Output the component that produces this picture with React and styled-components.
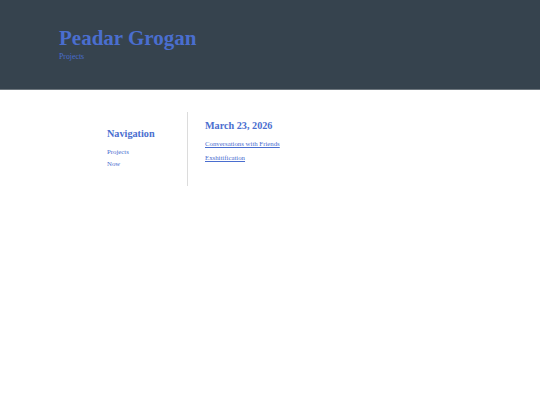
import React from "react";
import styled, { createGlobalStyle } from "styled-components";

const Global = createGlobalStyle`
  html, body { margin: 0; padding: 0; background: #ffffff; }
  body { font-family: "Liberation Serif", "Times New Roman", serif; }
`;

const BLUE = "#4a6ecf";

const Header = styled.header`
  background: #36434e;
  border-bottom: 1px solid #6d767d;
  padding: 26px 59px 27px;
`;

const Title = styled.h1`
  margin: 0;
  font-size: 21px;
  line-height: 24px;
  font-weight: bold;
  color: ${BLUE};
`;

const Sub = styled.a`
  display: block;
  margin-top: 2px;
  font-size: 7.8px;
  line-height: 10px;
  color: ${BLUE};
  text-decoration: none;
`;

const Main = styled.main`
  display: flex;
  align-items: flex-start;
  padding: 22px 0 0 107px;
`;

const NavCol = styled.nav`
  width: 80px;
  border-right: 1px solid #dcdcdc;
  padding: 16px 0 16px;
  display: flex;
  flex-direction: column;
`;

const Heading = styled.h3`
  margin: 0;
  font-size: 10.2px;
  line-height: 12px;
  font-weight: bold;
  color: ${BLUE};
`;

const NavList = styled.div`
  margin-top: 6px;
  display: flex;
  flex-direction: column;
`;

const NavLink = styled.a`
  font-size: 6.8px;
  line-height: 12px;
  color: ${BLUE};
  text-decoration: none;
`;

const Content = styled.section`
  padding: 7.5px 0 0 17px;
  display: flex;
  flex-direction: column;
`;

const PostList = styled.div`
  margin-top: 5px;
  display: flex;
  flex-direction: column;
`;

const PostLink = styled.a`
  font-size: 6.8px;
  line-height: 14px;
  color: ${BLUE};
  text-decoration: underline;
  align-self: flex-start;
`;

export default function App() {
  return (
    <>
      <Global />
      <Header>
        <Title>Peadar Grogan</Title>
        <Sub href="#">Projects</Sub>
      </Header>
      <Main>
        <NavCol>
          <Heading>Navigation</Heading>
          <NavList>
            <NavLink href="#">Projects</NavLink>
            <NavLink href="#">Now</NavLink>
          </NavList>
        </NavCol>
        <Content>
          <Heading>March 23, 2026</Heading>
          <PostList>
            <PostLink href="#">Conversations with Friends</PostLink>
            <PostLink href="#">Exshitification</PostLink>
          </PostList>
        </Content>
      </Main>
    </>
  );
}
